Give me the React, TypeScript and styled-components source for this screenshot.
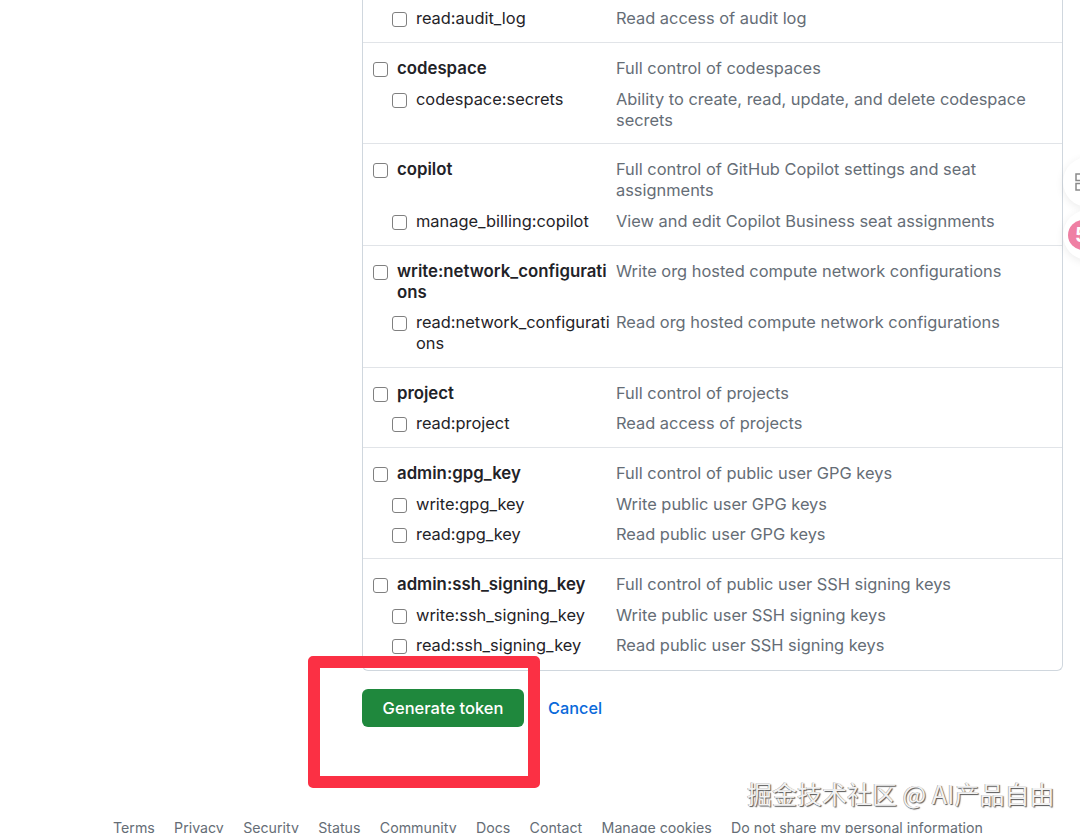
import React from 'react';
import styled, { createGlobalStyle } from 'styled-components';

const GlobalStyle = createGlobalStyle`
  html, body {
    margin: 0;
    padding: 0;
    height: 833px;
    overflow: hidden;
    background: #ffffff;
  }
  body {
    font-family: Inter, "Liberation Sans", sans-serif;
    -webkit-font-smoothing: antialiased;
  }
`;

const Page = styled.div`
  position: relative;
  width: 1080px;
  height: 833px;
  overflow: hidden;
`;

const Main = styled.main`
  display: flex;
  flex-direction: column;
  margin-left: 362px;
  width: 700px;
  height: 817px;
`;

const Panel = styled.div`
  border: 1px solid #d0d7de;
  border-top: none;
  border-radius: 0 0 6px 6px;
  box-sizing: border-box;
  width: 701px;
`;

const Group = styled.section<{ $first?: boolean }>`
  display: flex;
  flex-direction: column;
  gap: 9.67px;
  padding: ${(p) => (p.$first ? '8px 0 13px' : '15px 0 12.6px')};
  border-bottom: 1px solid #e1e4e8;

  &:last-child {
    border-bottom: none;
    padding-bottom: 13.5px;
  }
`;

const Row = styled.div<{ $child?: boolean }>`
  display: grid;
  grid-template-columns: ${(p) => (p.$child ? '224px' : '243px')} 1fr;
  padding-left: ${(p) => (p.$child ? '29px' : '10px')};
  padding-right: 30px;
  font-size: 16.4px;
  line-height: 21px;
`;

const NameCell = styled.label<{ $child?: boolean }>`
  display: flex;
  align-items: flex-start;
  gap: 9px;
  min-width: 0;
  padding-right: ${(p) => (p.$child ? '6px' : '8px')};
`;

const Check = styled.input.attrs({ type: 'checkbox' })`
  appearance: none;
  flex: none;
  width: 15px;
  height: 15px;
  margin: 4px 0 0;
  border: 1px solid #808080;
  border-radius: 3px;
  background: #ffffff;
`;

const Name = styled.span<{ $bold?: boolean }>`
  color: #1f2328;
  font-size: ${(p) => (p.$bold ? '16.8px' : '16.4px')};
  font-weight: ${(p) => (p.$bold ? 600 : 400)};
  min-width: 0;
  word-break: break-all;
`;

const Desc = styled.div`
  color: #656d76;
`;

const Actions = styled.div`
  display: flex;
  align-items: center;
  gap: 24px;
  margin-top: 18.5px;
`;

const GenerateButton = styled.button`
  width: 162px;
  height: 38px;
  padding: 0;
  border: none;
  border-radius: 6px;
  background: #1f883d;
  color: #ffffff;
  font-family: inherit;
  font-size: 16.5px;
  font-weight: 500;
`;

const CancelLink = styled.a`
  color: #0969da;
  font-size: 16.3px;
  font-weight: 500;
  text-decoration: none;
`;

const Footer = styled.footer`
  display: flex;
  gap: 19.3px;
  padding-left: 113px;
  font-size: 14.2px;
  line-height: 21px;
  color: #656d76;
  white-space: nowrap;
`;

// red box the author drew round the button
const Highlight = styled.div`
  position: absolute;
  left: 308px;
  top: 656px;
  width: 232px;
  height: 132px;
  box-sizing: border-box;
  border: 12px solid #fb3044;
  border-radius: 5px;
`;

const Watermark = styled.div`
  position: absolute;
  left: 747px;
  top: 778px;
  font-family: "Noto Sans CJK SC", Inter, sans-serif;
  font-size: 25px;
  line-height: 30px;
  white-space: nowrap;
  color: #f2f2f2;
  text-shadow: 1px 1px 1px #555555, -0.5px -0.5px 0 #999999;
`;

const SideTab = styled.div<{ $top: number }>`
  position: absolute;
  left: 1063px;
  top: ${(p) => p.$top}px;
  width: 50px;
  height: 50px;
  border-radius: 50%;
  background: #ffffff;
  box-shadow: 0 2px 8px rgba(0, 0, 0, 0.08);
  display: flex;
  align-items: center;
`;

const PinkBadge = styled.div`
  margin-left: 5px;
  padding-left: 7px;
  box-sizing: border-box;
  flex: none;
  width: 30px;
  height: 30px;
  border-radius: 50%;
  background: #ef7fa3;
  color: #ffffff;
  font-size: 20px;
  font-weight: 700;
  line-height: 30px;
`;

const GridIcon = styled.svg`
  margin-left: 12px;
  flex: none;
`;

const groups = [
  {
    first: true,
    rows: [{ name: 'read:audit_log', desc: 'Read access of audit log', child: true }],
  },
  {
    rows: [
      { name: 'codespace', desc: 'Full control of codespaces' },
      {
        name: 'codespace:secrets',
        desc: 'Ability to create, read, update, and delete codespace secrets',
        child: true,
      },
    ],
  },
  {
    rows: [
      { name: 'copilot', desc: 'Full control of GitHub Copilot settings and seat assignments' },
      {
        name: 'manage_billing:copilot',
        desc: 'View and edit Copilot Business seat assignments',
        child: true,
      },
    ],
  },
  {
    rows: [
      {
        name: 'write:network_configurations',
        desc: 'Write org hosted compute network configurations',
      },
      {
        name: 'read:network_configurations',
        desc: 'Read org hosted compute network configurations',
        child: true,
      },
    ],
  },
  {
    rows: [
      { name: 'project', desc: 'Full control of projects' },
      { name: 'read:project', desc: 'Read access of projects', child: true },
    ],
  },
  {
    rows: [
      { name: 'admin:gpg_key', desc: 'Full control of public user GPG keys' },
      { name: 'write:gpg_key', desc: 'Write public user GPG keys', child: true },
      { name: 'read:gpg_key', desc: 'Read public user GPG keys', child: true },
    ],
  },
  {
    rows: [
      { name: 'admin:ssh_signing_key', desc: 'Full control of public user SSH signing keys' },
      { name: 'write:ssh_signing_key', desc: 'Write public user SSH signing keys', child: true },
      { name: 'read:ssh_signing_key', desc: 'Read public user SSH signing keys', child: true },
    ],
  },
];

const footerLinks = [
  'Terms',
  'Privacy',
  'Security',
  'Status',
  'Community',
  'Docs',
  'Contact',
  'Manage cookies',
  'Do not share my personal information',
];

export default function App() {
  return (
    <Page>
      <GlobalStyle />
      <Main>
        <Panel>
          {groups.map((group) => (
            <Group key={group.rows[0].name} $first={group.first}>
              {group.rows.map((row) => (
                <Row key={row.name} $child={row.child}>
                  <NameCell $child={row.child}>
                    <Check />
                    <Name $bold={!row.child}>{row.name}</Name>
                  </NameCell>
                  <Desc>{row.desc}</Desc>
                </Row>
              ))}
            </Group>
          ))}
        </Panel>
        <Actions>
          <GenerateButton>Generate token</GenerateButton>
          <CancelLink href="#">Cancel</CancelLink>
        </Actions>
      </Main>
      <Footer>
        {footerLinks.map((link) => (
          <span key={link}>{link}</span>
        ))}
      </Footer>
      <Highlight />
      <Watermark>掘金技术社区 @ AI产品自由</Watermark>
      <SideTab $top={157}>
        <GridIcon width="18" height="18" viewBox="0 0 18 18" fill="none" stroke="#8a8a8a" strokeWidth="1.5">
          <rect x="1" y="1" width="6.5" height="6.5" />
          <rect x="1" y="10.5" width="6.5" height="6.5" />
          <rect x="10.5" y="1" width="6.5" height="6.5" />
        </GridIcon>
      </SideTab>
      <SideTab $top={210}>
        <PinkBadge>5</PinkBadge>
      </SideTab>
    </Page>
  );
}
